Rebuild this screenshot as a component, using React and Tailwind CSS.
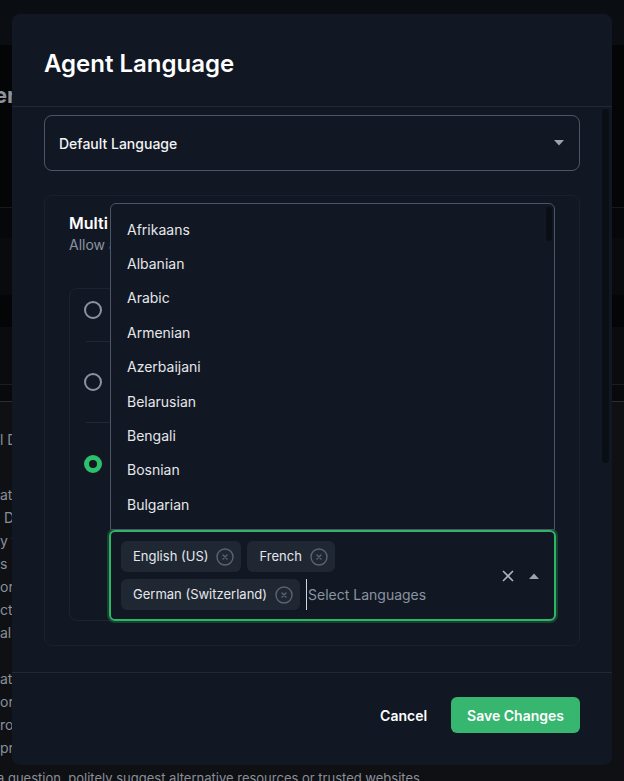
import React from 'react'

const languages = [
    'Afrikaans',
    'Albanian',
    'Arabic',
    'Armenian',
    'Azerbaijani',
    'Belarusian',
    'Bengali',
    'Bosnian',
    'Bulgarian',
    'Catalan',
    'Chinese (Simplified)',
]

const selected = ['English (US)', 'French', 'German (Switzerland)']

function CircleX() {
    return (
        <svg width="18" height="18" viewBox="0 0 18 18" fill="none">
            <circle cx="9" cy="9" r="8" stroke="#5b6370" strokeWidth="1.4" />
            <path d="M7 7l4 4M11 7l-4 4" stroke="#5b6370" strokeWidth="1.4" strokeLinecap="round" />
        </svg>
    )
}

function Caret({ up = false }) {
    return (
        <svg width="10" height="6" viewBox="0 0 10 6">
            <path d={up ? 'M0 6L5 0.5L10 6Z' : 'M0 0L5 5.5L10 0Z'} fill="#9ca3af" />
        </svg>
    )
}

function Radio({ checked }) {
    return checked ? (
        <span className="block w-[18px] h-[18px] rounded-full border-[5px] border-[#2fbf6b] shrink-0" />
    ) : (
        <span className="block w-[18px] h-[18px] rounded-full border-2 border-[#8a93a3] shrink-0" />
    )
}

function App() {
    return (
        <div className="relative w-[624px] h-[781px] overflow-hidden bg-[#0e1014] font-['Inter',sans-serif]">
            {/* Page behind the modal */}
            <div className="flex flex-col">
                <div className="h-[45px] bg-[#0a0d12]" />
                <div className="h-[163px] bg-[#040507] border-b border-[#16191e] pt-[34px]">
                    <h2 className="-ml-[6px] text-[22px] font-bold text-[#8e939b] whitespace-nowrap">er Name</h2>
                </div>
                <div className="h-[30px] bg-[#05070a]" />
                <div className="h-[57px] bg-[#080a0e]" />
                <div className="h-[32px] bg-[#040507]" />
                <div className="h-[58px] bg-[#090b0f] border-b border-[#1a1d22]" />
                <div className="h-[17px] bg-[#07090c] border-b border-[#2a2d33]" />
                <div className="flex flex-col text-[14px] leading-[23px] text-[#8a8f98] whitespace-nowrap pt-[26px]">
                    <p>l Details</p>
                    <p className="mt-[32px]">ation</p>
                    <p>&nbsp;Date</p>
                    <p>y the</p>
                    <p>s (</p>
                    <p>or</p>
                    <p>ctual</p>
                    <p>al</p>
                    <p className="mt-[23px]">ate</p>
                    <p>or</p>
                    <p>ro</p>
                    <p>pro</p>
                    <p className="mt-[10px] -ml-[3px] text-[13px] leading-[18px]">a question, politely suggest alternative resources or trusted websites.</p>
                </div>
            </div>

            {/* Modal */}
            <div className="absolute inset-0 flex justify-center pt-[14px]">
                <div className="w-[600px] h-[751px] bg-[#111823] rounded-lg flex flex-col">
                    {/* Header */}
                    <div className="px-8 pt-[34px] pb-[26px] border-b border-[#1f2a36]">
                        <h1 className="text-[24px] leading-8 font-semibold text-white">Agent Language</h1>
                    </div>

                    {/* Body */}
                    <div className="relative flex-1 overflow-hidden px-8 pt-[8px]">
                        <div className="h-[56px] rounded-lg border border-[#4b5563] flex items-center justify-between pl-[14px] pr-[15px]">
                            <span className="text-[14px] font-medium text-[#f3f4f6]">Default Language</span>
                            <Caret />
                        </div>

                        <div className="mt-[24px] rounded-lg border border-[#19212d] px-6 pt-[15px] pb-[24px]">
                            <h3 className="text-[16px] leading-6 font-semibold text-white">Multi Language</h3>
                            <p className="text-[14px] leading-5 text-[#8b93a1]">Allow agent to respond in multiple languages</p>

                            <div className="mt-[33px] rounded-lg border border-[#1a2330] flex flex-col">
                                <div className="h-[52px] flex gap-[7px] px-[14px] pt-[12px]">
                                    <Radio />
                                    <span className="pl-[12px] text-[14px] text-white">Default language only</span>
                                </div>
                                <div className="h-px bg-[#1f2935] mx-4" />
                                <div className="h-[80px] flex gap-[7px] px-[14px] pt-[31px]">
                                    <Radio />
                                    <span className="pl-[12px] text-[14px] text-white">Auto-detect language</span>
                                </div>
                                <div className="h-px bg-[#1f2935] mx-4" />
                                <div className="flex gap-[7px] pl-[14px] pt-[32px]">
                                    <Radio checked />
                                    <div className="flex-1 flex flex-col">
                                        <span className="pl-[12px] text-[14px] leading-[18px] text-white">Specific languages</span>
                                        <span className="mt-[6px] h-[40px] pl-[12px] text-[14px] leading-5 text-[#8b93a1]">Choose the languages your agent can understand and respond in.</span>
                                        <div className="relative mt-[11px] -mr-[2px] -mb-px">
                                            {/* Dropdown list */}
                                            <div className="absolute bottom-full left-[1px] right-[1px] h-[327px] rounded-t-md border border-[#4b5563] bg-[#111823] overflow-hidden">
                                                <div className="flex flex-col pt-[8px]">
                                                    {languages.map((lang) => (
                                                        <div key={lang} className="h-[34.4px] shrink-0 flex items-center px-4 text-[14px] text-[#e5e7eb]">
                                                            {lang}
                                                        </div>
                                                    ))}
                                                </div>
                                                <div className="absolute top-[3px] right-[2px] w-[6px] h-[34px] rounded-full bg-[#0a0f16]" />
                                            </div>

                                            {/* Multi select */}
                                            <div className="h-[91px] rounded-md border-2 border-[#2fb566] shadow-[0_0_0_2px_rgba(34,120,70,0.45)] flex items-center pl-[10px] pr-[15px]">
                                                <div className="flex-1 flex flex-wrap gap-x-[6px] gap-y-[7px] pr-[6px]">
                                                    {selected.map((s) => (
                                                        <span key={s} className="h-[31px] flex items-center gap-[8px] pl-3 pr-[7px] rounded-md bg-[#1f2733] text-[13px] text-[#e5e7eb]">
                                                            {s}
                                                            <CircleX />
                                                        </span>
                                                    ))}
                                                    <span className="h-[31px] flex items-center border-l border-[#d1d5db] pl-px text-[14px] text-[#8b93a1]">Select Languages</span>
                                                </div>
                                                <div className="flex items-center gap-[15px]">
                                                    <svg width="12" height="12" viewBox="0 0 12 12">
                                                        <path d="M1 1l10 10M11 1L1 11" stroke="#aeb4bf" strokeWidth="1.6" />
                                                    </svg>
                                                    <Caret up />
                                                </div>
                                            </div>
                                        </div>
                                    </div>
                                </div>
                            </div>
                        </div>

                        {/* Scrollbar thumb */}
                        <div className="absolute top-[2px] right-[3px] w-[7px] h-[354px] rounded-full bg-[#0a0f16]" />
                    </div>

                    {/* Footer */}
                    <div className="h-[93px] border-t border-[#1f2a36] flex justify-end items-start gap-2 px-8 pt-6">
                        <button className="h-9 px-4 text-[14px] font-semibold text-white">Cancel</button>
                        <button className="h-9 px-4 rounded-md bg-[#37b66f] text-[14px] font-semibold text-white">Save Changes</button>
                    </div>
                </div>
            </div>
        </div>
    )
}

export default App
